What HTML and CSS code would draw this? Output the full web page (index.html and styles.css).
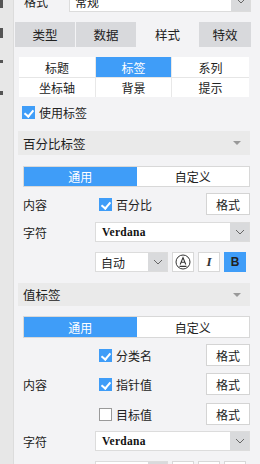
FILE: index.html
```html
<!DOCTYPE html>
<html lang="zh">
<head>
    <meta charset="UTF-8">
    <title>标签样式</title>
    <link rel="stylesheet" href="styles.css">
</head>
<body>
<div class="app">
    <div class="rail">
        <span class="rail-mark m1"></span>
        <span class="rail-mark m2"></span>
        <span class="rail-mark m3"></span>
        <span class="rail-mark m4"></span>
    </div>
    <div class="panel">
        <div class="top-row">
            <span class="top-label">格式</span>
            <div class="select top-select">
                <span class="select-text">常规</span>
                <span class="arrow"><svg width="10" height="6" viewBox="0 0 10 6"><path d="M1 1 L5 5 L9 1" fill="none" stroke="#666" stroke-width="1"/></svg></span>
            </div>
        </div>

        <div class="tabs">
            <span class="tab t1">类型</span>
            <span class="tab t2">数据</span>
            <span class="tab t3 active">样式</span>
            <span class="tab t4">特效</span>
        </div>

        <div class="sub-grid">
            <span class="cell">标题</span>
            <span class="cell active">标签</span>
            <span class="cell">系列</span>
            <span class="cell">坐标轴</span>
            <span class="cell">背景</span>
            <span class="cell">提示</span>
        </div>

        <div class="check-row">
            <span class="cb on"></span>
            <span>使用标签</span>
        </div>

        <div class="section-head">
            <span>百分比标签</span>
            <span class="tri"></span>
        </div>
        <div class="section-body">
            <div class="seg seg-a">
                <span class="seg-item on">通用</span>
                <span class="seg-item">自定义</span>
            </div>
            <div class="form-row row-btn r-first">
                <span class="lbl">内容</span>
                <div class="ctrl">
                    <span class="cb on"></span>
                    <span class="cb-text">百分比</span>
                    <button class="fmt-btn">格式</button>
                </div>
            </div>
            <div class="form-row row-sel">
                <span class="lbl">字符</span>
                <div class="select font-select">
                    <span class="select-text mono">Verdana</span>
                    <span class="arrow"><svg width="10" height="6" viewBox="0 0 10 6"><path d="M1 1 L5 5 L9 1" fill="none" stroke="#666" stroke-width="1"/></svg></span>
                </div>
            </div>
            <div class="form-row row-sel r-style">
                <span class="lbl"></span>
                <div class="style-ctrls">
                    <div class="select size-select">
                        <span class="select-text">自动</span>
                        <span class="arrow"><svg width="10" height="6" viewBox="0 0 10 6"><path d="M1 1 L5 5 L9 1" fill="none" stroke="#666" stroke-width="1"/></svg></span>
                    </div>
                    <span class="icon-btn">
                        <svg width="16" height="16" viewBox="0 0 16 16"><circle cx="8" cy="8" r="7" fill="none" stroke="#333" stroke-width="1"/><path d="M5.2 10.5 L8 3.6 L10.8 10.5 M6.2 8.3 H9.8 M4.5 12.4 H11.5" fill="none" stroke="#333" stroke-width="1.1"/></svg>
                    </span>
                    <span class="icon-btn italic">I</span>
                    <span class="icon-btn bold on">B</span>
                </div>
            </div>
        </div>

        <div class="section-head head-b">
            <span>值标签</span>
            <span class="tri"></span>
        </div>
        <div class="section-body">
            <div class="seg seg-b">
                <span class="seg-item on">通用</span>
                <span class="seg-item">自定义</span>
            </div>
            <div class="form-row group">
                <span class="lbl">内容</span>
                <div class="group-list">
                    <div class="ctrl">
                        <span class="cb on"></span>
                        <span class="cb-text">分类名</span>
                        <button class="fmt-btn">格式</button>
                    </div>
                    <div class="ctrl g2">
                        <span class="cb on"></span>
                        <span class="cb-text">指针值</span>
                        <button class="fmt-btn">格式</button>
                    </div>
                    <div class="ctrl g3">
                        <span class="cb"></span>
                        <span class="cb-text">目标值</span>
                        <button class="fmt-btn">格式</button>
                    </div>
                </div>
            </div>
            <div class="form-row row-sel r-font2">
                <span class="lbl">字符</span>
                <div class="select font-select">
                    <span class="select-text mono">Verdana</span>
                    <span class="arrow"><svg width="10" height="6" viewBox="0 0 10 6"><path d="M1 1 L5 5 L9 1" fill="none" stroke="#666" stroke-width="1"/></svg></span>
                </div>
            </div>
            <div class="form-row row-sel r-style">
                <span class="lbl"></span>
                <div class="style-ctrls">
                    <div class="select size-select">
                        <span class="select-text">自动</span>
                        <span class="arrow"></span>
                    </div>
                    <span class="icon-btn"></span>
                    <span class="icon-btn"></span>
                    <span class="icon-btn"></span>
                </div>
            </div>
        </div>
    </div>
</div>
</body>
</html>
```

FILE: styles.css
```css
* {
    box-sizing: border-box;
}
body {
    margin: 0;
    width: 260px;
    height: 464px;
    overflow: hidden;
    background: #f3f3f5;
    font-family: "Noto Sans CJK SC", "Noto Sans", sans-serif;
    font-size: 12px;
    color: #222;
}
.app {
    display: flex;
    height: 464px;
}
.rail {
    width: 14px;
    flex: none;
    background: #e7e7e7;
    border-right: 1px solid #dcdcdc;
    display: flex;
    flex-direction: column;
    align-items: flex-start;
}
.rail-mark {
    display: block;
    width: 3px;
    background: #555;
}
.m1 { height: 8px; margin-top: 0; }
.m2 { height: 10px; margin-top: 20px; }
.m3 { height: 3px; margin-top: 22px; }
.m4 { height: 4px; margin-top: 28px; }
.panel {
    width: 246px;
    padding: 0 9px 0 1px;
}
.top-row {
    display: flex;
    align-items: center;
    height: 22px;
    margin-top: -10px;
}
.top-label {
    padding-left: 9px;
}
.select {
    display: flex;
    align-items: center;
    background: #fff;
    border: 1px solid #dcdcdc;
    height: 20px;
    overflow: hidden;
}
.select-text {
    flex: 1;
    padding-left: 5px;
    white-space: nowrap;
}
.arrow {
    width: 19px;
    height: 100%;
    background: #d9dadc;
    display: flex;
    align-items: center;
    justify-content: center;
    flex: none;
}
.top-select {
    margin-left: auto;
    width: 182px;
    height: 22px;
}
.tabs {
    display: flex;
    gap: 1px;
    margin-top: 10px;
    height: 25px;
}
.tab {
    background: #d8d9dc;
    display: flex;
    align-items: center;
    justify-content: center;
    font-size: 12.5px;
}
.t1 { width: 60px; }
.t2 { width: 60px; }
.t3 { width: 61px; }
.t4 { width: 52px; }
.tab.active {
    background: #f3f3f5;
}
.sub-grid {
    display: grid;
    grid-template-columns: 77px 76px 77px;
    grid-template-rows: 20px 19px;
    gap: 1px 0;
    background: #e6e6e6;
    margin: 10px 2px 0 4px;
}
.cell {
    background: #fff;
    display: flex;
    align-items: center;
    justify-content: center;
    border-right: 1px solid #e8e8e8;
}
.cell:nth-child(3n) {
    border-right: none;
}
.cell.active {
    background: #3f9df8;
    color: #fff;
}
.check-row {
    display: flex;
    align-items: center;
    gap: 4px;
    margin-top: 8px;
    height: 14px;
    padding-left: 7px;
}
.cb {
    width: 13px;
    height: 13px;
    flex: none;
    border: 1px solid #9a9a9a;
    background: #fff;
    position: relative;
}
.cb.on {
    background: #3f9df8;
    border-color: #3f9df8;
}
.cb.on::after {
    content: "";
    position: absolute;
    left: 3px;
    top: 1px;
    width: 4px;
    height: 7px;
    border-right: 2px solid #fff;
    border-bottom: 2px solid #fff;
    transform: rotate(40deg);
}
.section-head {
    display: flex;
    align-items: center;
    justify-content: space-between;
    background: #eaeaea;
    height: 24px;
    margin: 12px 1px 0 3px;
    padding: 0 9px 0 5px;
    font-size: 12.5px;
}
.head-b {
    margin-top: 11px;
    height: 23px;
}
.tri {
    width: 0;
    height: 0;
    border-left: 4px solid transparent;
    border-right: 4px solid transparent;
    border-top: 4px solid #999;
}
.section-body {
    padding: 0 1px 0 8px;
}
.seg {
    display: flex;
    border: 1px solid #d8d8d8;
    background: #fff;
    height: 21px;
    margin-top: 11px;
}
.seg-b {
    margin-top: 10px;
    height: 22px;
}
.seg-item {
    flex: 1;
    display: flex;
    align-items: center;
    justify-content: center;
}
.seg-item.on {
    background: #3f9df8;
    color: #fff;
}
.form-row {
    display: flex;
    align-items: center;
}
.lbl {
    width: 72px;
    flex: none;
}
.row-btn {
    height: 22px;
    margin-top: 6px;
}
.row-sel {
    height: 20px;
    margin-top: 7px;
}
.r-style {
    margin-top: 10px;
}
.ctrl {
    flex: 1;
    display: flex;
    align-items: center;
    height: 22px;
    padding-left: 4px;
}
.cb-text {
    margin-left: 4px;
}
.fmt-btn {
    margin-left: auto;
    width: 44px;
    height: 22px;
    background: #fff;
    border: 1px solid #d4d4d4;
    font-family: inherit;
    font-size: 12px;
    color: #222;
    padding: 0;
}
.font-select {
    flex: 1;
}
.mono {
    font-family: "Liberation Serif", serif;
    font-size: 11.5px;
    font-weight: bold;
    letter-spacing: 0.3px;
    color: #111;
    padding-left: 6px;
}
.style-ctrls {
    flex: 1;
    display: flex;
    align-items: center;
    gap: 4px;
}
.size-select {
    width: 73px;
}
.icon-btn {
    width: 22px;
    height: 20px;
    background: #fff;
    border: 1px solid #d8d8d8;
    display: flex;
    align-items: center;
    justify-content: center;
}
.italic {
    font-family: "Liberation Serif", serif;
    font-style: italic;
    font-weight: bold;
    font-size: 13px;
    color: #333;
}
.bold {
    font-family: "Liberation Sans", sans-serif;
    font-weight: bold;
    font-size: 12px;
    color: #222;
}
.icon-btn.on {
    background: #3f9df8;
    border-color: #3f9df8;
}
.group {
    margin-top: 6px;
}
.group-list {
    flex: 1;
    display: flex;
    flex-direction: column;
}
.g2 {
    margin-top: 7px;
}
.g3 {
    margin-top: 8px;
}
.r-font2 {
    margin-top: 6px;
}
```
